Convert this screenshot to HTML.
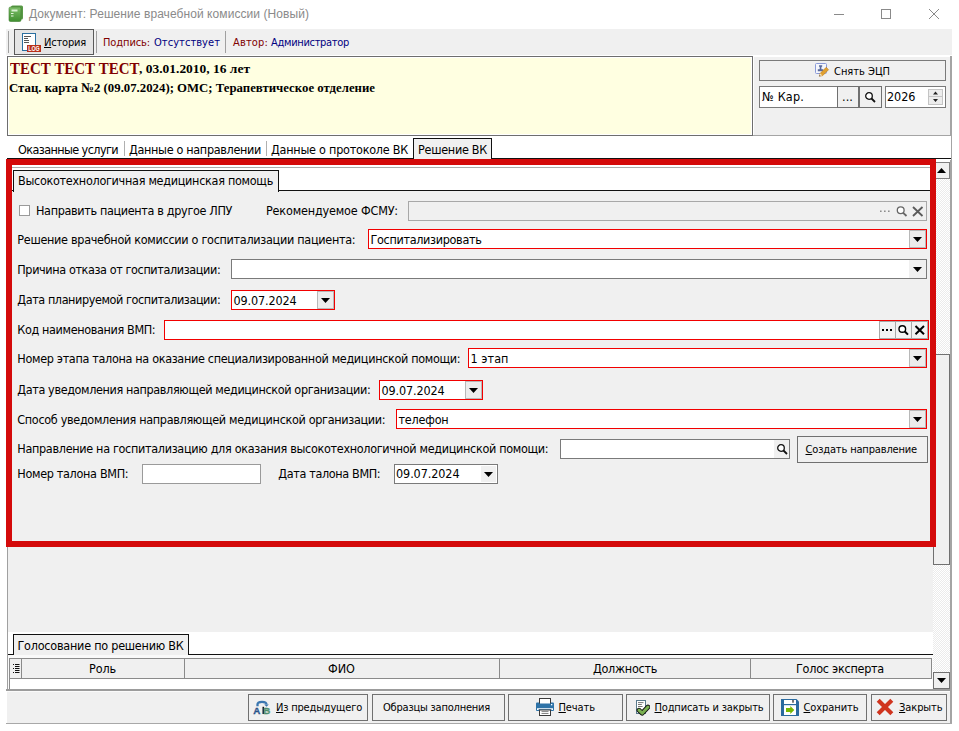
<!DOCTYPE html>
<html lang="ru"><head><meta charset="utf-8"><title>Документ: Решение врачебной комиссии (Новый)</title>
<style>
html,body{margin:0;padding:0;background:#fff;}
body{width:959px;height:731px;position:relative;overflow:hidden;font-family:'DejaVu Sans Condensed','DejaVu Sans','Liberation Sans',sans-serif;font-size:12.5px;color:#000;font-stretch:condensed;}
div,span,svg{position:absolute;box-sizing:border-box;}
span{white-space:nowrap;line-height:1;}
u{text-decoration:underline;text-underline-offset:1px;}
</style></head>
<body>
<div style="left:7px;top:29px;width:945px;height:694px;background:#f0f0f0;"></div>
<div style="left:6px;top:29px;width:1px;height:26px;background:#f0f0f0;"></div>
<div style="left:950px;top:56px;width:2px;height:668px;background:#a4a4a4;"></div>
<div style="left:6px;top:55px;width:946px;height:1px;background:#fff;"></div>
<div style="left:753px;top:56px;width:197px;height:1px;background:#fff;"></div>
<div style="left:753px;top:56px;width:1px;height:79px;background:#fff;"></div>
<div style="left:753px;top:135px;width:197px;height:1px;background:#a4a4a4;"></div>
<div style="left:6px;top:723px;width:946px;height:1px;background:#a8a8a8;"></div>
<svg style="left:8px;top:5px" width="16" height="17" viewBox="0 0 16 17">
<defs><linearGradient id="g1" x1="0" y1="0" x2="0" y2="1"><stop offset="0" stop-color="#7fbf6a"/><stop offset="1" stop-color="#3f8f2f"/></linearGradient></defs>
<rect x="3" y="0.5" width="12" height="14" rx="1.5" fill="#5a9a48"/>
<rect x="1" y="2" width="12" height="14.5" rx="1.5" fill="url(#g1)" stroke="#3d7d2d" stroke-width="0.6"/>
<rect x="3.5" y="4.5" width="6" height="2" fill="#d8efd0"/>
<rect x="3" y="8" width="2.5" height="1" fill="#e8f5e2"/><rect x="3" y="10.5" width="2.5" height="1" fill="#e8f5e2"/>
</svg>
<span style="left:29px;top:7.85px;font-size:12px;color:#8a8a8a;font-family:'Liberation Sans',sans-serif;letter-spacing:0.070px;">Документ: Решение врачебной комиссии (Новый)</span>
<svg style="left:830px;top:5px" width="120" height="20" viewBox="0 0 120 20">
<path d="M4 9.5H14" stroke="#8a8a8a" stroke-width="1" fill="none"/>
<rect x="51.5" y="4.5" width="9" height="9" stroke="#8a8a8a" stroke-width="1" fill="none"/>
<path d="M99 4L109 14M109 4L99 14" stroke="#8a8a8a" stroke-width="1" fill="none"/>
</svg>
<div style="left:8px;top:31px;width:1px;height:22px;background:#a0a0a0;"></div>
<div style="left:14px;top:29px;width:80px;height:26px;background:#e5e5e5;border:1px solid #5a5a5a;"></div>
<svg style="left:22px;top:33px" width="20" height="19" viewBox="0 0 20 19">
<rect x="0.5" y="0.5" width="13" height="17" fill="#fff" stroke="#2a6fa0" stroke-width="1"/>
<path d="M2 3.5H9M2 5.5H6M2 7.5H7M2 9.5H7" stroke="#555" stroke-width="1"/>
<rect x="5" y="12" width="14" height="7" fill="#b8301a"/>
<text x="12" y="18" font-family="Liberation Sans,sans-serif" font-weight="bold" font-size="7.2" fill="#fff" text-anchor="middle" textLength="11.5" lengthAdjust="spacingAndGlyphs">LOG</text>
</svg>
<span style="left:44px;top:36.69px;font-size:11px;color:#000;font-family:'DejaVu Sans Condensed','DejaVu Sans','Liberation Sans',sans-serif;letter-spacing:-0.190px;"><u>И</u>стория</span>
<div style="left:96px;top:31px;width:1px;height:22px;background:#a0a0a0;"></div>
<span style="left:103px;top:36.69px;font-size:11px;color:#800000;font-family:'DejaVu Sans Condensed','DejaVu Sans','Liberation Sans',sans-serif;letter-spacing:-0.107px;">Подпись:</span>
<span style="left:154px;top:36.69px;font-size:11px;color:#000080;font-family:'DejaVu Sans Condensed','DejaVu Sans','Liberation Sans',sans-serif;letter-spacing:0.058px;">Отсутствует</span>
<div style="left:225px;top:31px;width:1px;height:22px;background:#a0a0a0;"></div>
<span style="left:233px;top:36.69px;font-size:11px;color:#800000;font-family:'DejaVu Sans Condensed','DejaVu Sans','Liberation Sans',sans-serif;letter-spacing:0.159px;">Автор:</span>
<span style="left:271px;top:36.69px;font-size:11px;color:#000080;font-family:'DejaVu Sans Condensed','DejaVu Sans','Liberation Sans',sans-serif;letter-spacing:-0.312px;">Администратор</span>
<div style="left:7px;top:56px;width:746px;height:80px;background:#ffffe1;border:1px solid #6e6e6e;box-shadow:inset 0 0 0 1px #fff;"></div>
<span style="left:9.7px;top:60.6px;font-size:16px;color:#800000;font-family:'Liberation Serif',serif;font-weight:bold;transform:scaleX(0.9335);transform-origin:0 0;">ТЕСТ ТЕСТ ТЕСТ</span>
<span style="left:139px;top:62.46px;font-size:13.3px;color:#000;font-family:'Liberation Serif',serif;font-weight:bold;transform:scaleX(1.0123);transform-origin:0 0;">, 03.01.2010, 16 лет</span>
<span style="left:9.3px;top:81.46px;font-size:13.3px;color:#000;font-family:'Liberation Serif',serif;font-weight:bold;transform:scaleX(0.9613);transform-origin:0 0;">Стац. карта №2 (09.07.2024); ОМС; Терапевтическое отделение</span>
<div style="left:759px;top:60px;width:187px;height:21px;background:#f0f0f0;border:1px solid #7a7a7a;"></div>
<svg style="left:815px;top:63px" width="16" height="15" viewBox="0 0 16 15">
<rect x="0.5" y="0.5" width="11" height="10" rx="1" fill="#f4f6fc" stroke="#8a9ad8" stroke-width="1"/>
<path d="M4 2.2h3.2v1.3l-.8.6v2.2h1.8v2H2.8v-2h1.9V4.100l-.7-.6z" fill="#5a6a9a"/>
<path d="M4.300 13.300l.9-3 6-6 2.400 2.400-6 6z" fill="#e0a030" stroke="#b87410" stroke-width="0.5"/>
<path d="M4.300 13.300l.9-3 2.100 2.100z" fill="#f6e2b8"/><path d="M4.300 13.300l.4-1.300.9.900z" fill="#1a2a5a"/>
</svg>
<span style="left:834px;top:65.69px;font-size:11px;color:#000;font-family:'DejaVu Sans Condensed','DejaVu Sans','Liberation Sans',sans-serif;letter-spacing:-0.014px;">Снять ЭЦП</span>
<div style="left:759px;top:86px;width:79px;height:22px;background:#fff;border:1px solid #7a7a7a;"></div>
<span style="left:762px;top:91.42px;font-size:12.5px;color:#000;font-family:'DejaVu Sans Condensed','DejaVu Sans','Liberation Sans',sans-serif;letter-spacing:0.190px;">№ Кар.</span>
<div style="left:837px;top:86px;width:22px;height:22px;background:#f0f0f0;border:1px solid #707070;"></div>
<span style="left:842px;top:91.42px;font-size:12.5px;color:#000;font-family:'DejaVu Sans Condensed','DejaVu Sans','Liberation Sans',sans-serif;letter-spacing:0.094px;">...</span>
<div style="left:859px;top:86px;width:23px;height:22px;background:#f0f0f0;border:1px solid #707070;"></div>
<svg style="left:864px;top:91px" width="13" height="13" viewBox="0 0 13 13"><circle cx="5" cy="5" r="3.300" fill="#fff" stroke="#111" stroke-width="1.300"/><path d="M7.500 7.500L11 11" stroke="#111" stroke-width="1.800"/></svg>
<div style="left:885px;top:86px;width:61px;height:22px;background:#fff;border:1px solid #7a7a7a;"></div>
<span style="left:887px;top:91.42px;font-size:12.5px;color:#000;font-family:'DejaVu Sans Condensed','DejaVu Sans','Liberation Sans',sans-serif;letter-spacing:-0.031px;">2026</span>
<div style="left:928px;top:89px;width:15px;height:16px;background:#ececec;border:1px solid #c4c4c4;"></div>
<div style="left:928px;top:96px;width:15px;height:1px;background:#c4c4c4;"></div>
<svg style="left:928px;top:89px" width="15" height="16" viewBox="0 0 15 16"><path d="M5 5.5L7.5 2.5L10 5.5Z M5 10L7.5 13L10 10Z" fill="#222"/></svg>
<div style="left:7px;top:136px;width:944px;height:24px;background:#fff;"></div>
<div style="left:7px;top:158px;width:944px;height:1px;background:#111;"></div>
<span style="left:18px;top:144.43px;font-size:12.5px;color:#000;font-family:'DejaVu Sans Condensed','DejaVu Sans','Liberation Sans',sans-serif;letter-spacing:-0.587px;">Оказанные услуги</span>
<div style="left:124px;top:141px;width:1px;height:15px;background:#b0b0b0;"></div>
<span style="left:129px;top:144.43px;font-size:12.5px;color:#000;font-family:'DejaVu Sans Condensed','DejaVu Sans','Liberation Sans',sans-serif;letter-spacing:-0.328px;">Данные о направлении</span>
<div style="left:266px;top:141px;width:1px;height:15px;background:#b0b0b0;"></div>
<span style="left:271px;top:144.43px;font-size:12.5px;color:#000;font-family:'DejaVu Sans Condensed','DejaVu Sans','Liberation Sans',sans-serif;letter-spacing:-0.242px;">Данные о протоколе ВК</span>
<div style="left:413px;top:138px;width:79px;height:21px;background:#f0f0f0;border:1px solid #111;border-bottom:none;"></div>
<span style="left:418px;top:144.43px;font-size:12.5px;color:#000;font-family:'DejaVu Sans Condensed','DejaVu Sans','Liberation Sans',sans-serif;letter-spacing:-0.277px;">Решение ВК</span>
<div style="left:7px;top:159px;width:928px;height:388px;background:#f0f0f0;"></div>
<div style="left:12px;top:165px;width:918px;height:26px;background:#fff;"></div>
<div style="left:12px;top:167px;width:918px;height:1px;background:#acacac;"></div>
<div style="left:12px;top:190px;width:918px;height:1px;background:#111;"></div>
<div style="left:13px;top:170px;width:266px;height:22px;background:#f0f0f0;border:1px solid #111;border-bottom:none;"></div>
<span style="left:18px;top:175.43px;font-size:12.5px;color:#000;font-family:'DejaVu Sans Condensed','DejaVu Sans','Liberation Sans',sans-serif;letter-spacing:-0.290px;">Высокотехнологичная медицинская помощь</span>
<div style="left:19px;top:205px;width:11px;height:11px;background:#fff;border:1px solid #9a9a9a;"></div>
<span style="left:36px;top:205.43px;font-size:12.5px;color:#000;font-family:'DejaVu Sans Condensed','DejaVu Sans','Liberation Sans',sans-serif;letter-spacing:-0.346px;">Направить пациента в другое ЛПУ</span>
<span style="left:266px;top:205.43px;font-size:12.5px;color:#000;font-family:'DejaVu Sans Condensed','DejaVu Sans','Liberation Sans',sans-serif;letter-spacing:-0.170px;">Рекомендуемое ФСМУ:</span>
<div style="left:408px;top:201px;width:519px;height:20px;background:#f0f0f0;border:1px solid #a8a8a8;"></div>
<svg style="left:878px;top:203px" width="48" height="17" viewBox="0 0 48 17"><path d="M2 7.500h1.600v1.600h-1.600zM6 7.500h1.600v1.600h-1.600zM10 7.500h1.600v1.600h-1.600z" fill="#8c8c8c"/><circle cx="22.700" cy="7.200" r="3.400" fill="#fff" stroke="#666" stroke-width="1.300"/><path d="M25.200 9.800L28.500 13" stroke="#666" stroke-width="1.800"/><path d="M35 4L44.500 13M44.500 4L35 13" stroke="#5a5a5a" stroke-width="1.800"/></svg>
<span style="left:17.3px;top:234.43px;font-size:12.5px;color:#000;font-family:'DejaVu Sans Condensed','DejaVu Sans','Liberation Sans',sans-serif;letter-spacing:-0.298px;">Решение врачебной комиссии о госпитализации пациента:</span>
<div style="left:368px;top:229px;width:559px;height:20px;background:#fff;border:1px solid #f20000;"></div>
<div style="left:909px;top:230px;width:17px;height:18px;background:#ececec;border:1px solid #b8b8b8;"></div>
<svg style="left:913px;top:237px" width="9" height="5" viewBox="0 0 9 5"><path d="M0 0H9L4.5 5Z" fill="#000"/></svg>
<span style="left:370.5px;top:233.73px;font-size:12.5px;color:#000;font-family:'DejaVu Sans Condensed','DejaVu Sans','Liberation Sans',sans-serif;letter-spacing:-0.325px;">Госпитализировать</span>
<span style="left:17.3px;top:264.43px;font-size:12.5px;color:#000;font-family:'DejaVu Sans Condensed','DejaVu Sans','Liberation Sans',sans-serif;letter-spacing:-0.386px;">Причина отказа от госпитализации:</span>
<div style="left:231px;top:259px;width:696px;height:20px;background:#fff;border:1px solid #7a7a7a;"></div>
<div style="left:909px;top:260px;width:17px;height:18px;background:#f0f0f0;"></div>
<svg style="left:913px;top:267px" width="9" height="5" viewBox="0 0 9 5"><path d="M0 0H9L4.5 5Z" fill="#000"/></svg>
<span style="left:17.3px;top:294.43px;font-size:12.5px;color:#000;font-family:'DejaVu Sans Condensed','DejaVu Sans','Liberation Sans',sans-serif;letter-spacing:-0.414px;">Дата планируемой госпитализации:</span>
<div style="left:231px;top:290px;width:104px;height:20px;background:#fff;border:1px solid #f20000;"></div>
<div style="left:317px;top:291px;width:17px;height:18px;background:#ececec;border:1px solid #b8b8b8;"></div>
<svg style="left:321px;top:298px" width="9" height="5" viewBox="0 0 9 5"><path d="M0 0H9L4.5 5Z" fill="#000"/></svg>
<span style="left:233.5px;top:294.73px;font-size:12.5px;color:#000;font-family:'DejaVu Sans Condensed','DejaVu Sans','Liberation Sans',sans-serif;letter-spacing:-0.138px;">09.07.2024</span>
<span style="left:17.3px;top:324.43px;font-size:12.5px;color:#000;font-family:'DejaVu Sans Condensed','DejaVu Sans','Liberation Sans',sans-serif;letter-spacing:-0.362px;">Код наименования ВМП:</span>
<div style="left:164px;top:320px;width:765px;height:20px;background:#fff;border:1px solid #f20000;"></div>
<div style="left:879px;top:321px;width:17px;height:18px;background:#f2f2f2;border:1px solid #a8a8a8;"></div>
<div style="left:895px;top:321px;width:17px;height:18px;background:#f2f2f2;border:1px solid #a8a8a8;"></div>
<div style="left:911px;top:321px;width:17px;height:18px;background:#f2f2f2;border:1px solid #a8a8a8;"></div>
<svg style="left:879px;top:321px" width="49" height="18" viewBox="0 0 49 18"><path d="M3 8h2v2h-2zM7 8h2v2h-2zM11 8h2v2h-2z" fill="#000"/><circle cx="23.300" cy="8" r="3.300" fill="#fff" stroke="#000" stroke-width="1.400"/><path d="M25.800 10.500L29 13.600" stroke="#000" stroke-width="2"/><path d="M36.500 5L45 13.300M45 5L36.500 13.300" stroke="#000" stroke-width="2"/></svg>
<span style="left:17.3px;top:353.43px;font-size:12.5px;color:#000;font-family:'DejaVu Sans Condensed','DejaVu Sans','Liberation Sans',sans-serif;letter-spacing:-0.327px;">Номер этапа талона на оказание специализированной медицинской помощи:</span>
<div style="left:468px;top:348px;width:459px;height:20px;background:#fff;border:1px solid #f20000;"></div>
<div style="left:909px;top:349px;width:17px;height:18px;background:#ececec;border:1px solid #b8b8b8;"></div>
<svg style="left:913px;top:356px" width="9" height="5" viewBox="0 0 9 5"><path d="M0 0H9L4.5 5Z" fill="#000"/></svg>
<span style="left:470.5px;top:352.73px;font-size:12.5px;color:#000;font-family:'DejaVu Sans Condensed','DejaVu Sans','Liberation Sans',sans-serif;letter-spacing:0.049px;">1 этап</span>
<span style="left:17.3px;top:384.43px;font-size:12.5px;color:#000;font-family:'DejaVu Sans Condensed','DejaVu Sans','Liberation Sans',sans-serif;letter-spacing:-0.373px;">Дата уведомления направляющей медицинской организации:</span>
<div style="left:379px;top:380px;width:104px;height:20px;background:#fff;border:1px solid #f20000;"></div>
<div style="left:465px;top:381px;width:17px;height:18px;background:#ececec;border:1px solid #b8b8b8;"></div>
<svg style="left:469px;top:388px" width="9" height="5" viewBox="0 0 9 5"><path d="M0 0H9L4.5 5Z" fill="#000"/></svg>
<span style="left:381.5px;top:384.73px;font-size:12.5px;color:#000;font-family:'DejaVu Sans Condensed','DejaVu Sans','Liberation Sans',sans-serif;letter-spacing:-0.138px;">09.07.2024</span>
<span style="left:17.3px;top:414.43px;font-size:12.5px;color:#000;font-family:'DejaVu Sans Condensed','DejaVu Sans','Liberation Sans',sans-serif;letter-spacing:-0.324px;">Способ уведомления направляющей медицинской организации:</span>
<div style="left:396px;top:409px;width:531px;height:20px;background:#fff;border:1px solid #f20000;"></div>
<div style="left:909px;top:410px;width:17px;height:18px;background:#ececec;border:1px solid #b8b8b8;"></div>
<svg style="left:913px;top:417px" width="9" height="5" viewBox="0 0 9 5"><path d="M0 0H9L4.5 5Z" fill="#000"/></svg>
<span style="left:398.5px;top:413.73px;font-size:12.5px;color:#000;font-family:'DejaVu Sans Condensed','DejaVu Sans','Liberation Sans',sans-serif;letter-spacing:-0.205px;">телефон</span>
<span style="left:17.3px;top:443.43px;font-size:12.5px;color:#000;font-family:'DejaVu Sans Condensed','DejaVu Sans','Liberation Sans',sans-serif;letter-spacing:-0.318px;">Направление на госпитализацию для оказания высокотехнологичной медицинской помощи:</span>
<div style="left:560px;top:439px;width:230px;height:20px;background:#fff;border:1px solid #7a7a7a;"></div>
<div style="left:774px;top:440px;width:15px;height:18px;background:#f0f0f0;"></div>
<svg style="left:776px;top:443px" width="13" height="13" viewBox="0 0 13 13"><circle cx="5" cy="5" r="3.300" fill="#fff" stroke="#111" stroke-width="1.300"/><path d="M7.500 7.500L11 11" stroke="#111" stroke-width="1.800"/></svg>
<div style="left:797px;top:436px;width:131px;height:27px;background:#f0f0f0;border:1px solid #707070;"></div>
<span style="left:805.5px;top:443.69px;font-size:11px;color:#000;font-family:'DejaVu Sans Condensed','DejaVu Sans','Liberation Sans',sans-serif;letter-spacing:-0.157px;"><u>С</u>оздать направление</span>
<span style="left:17.3px;top:468.43px;font-size:12.5px;color:#000;font-family:'DejaVu Sans Condensed','DejaVu Sans','Liberation Sans',sans-serif;letter-spacing:-0.321px;">Номер талона ВМП:</span>
<div style="left:142px;top:464px;width:119px;height:20px;background:#fff;border:1px solid #9a9a9a;"></div>
<span style="left:278.3px;top:468.43px;font-size:12.5px;color:#000;font-family:'DejaVu Sans Condensed','DejaVu Sans','Liberation Sans',sans-serif;letter-spacing:-0.355px;">Дата талона ВМП:</span>
<div style="left:394px;top:464px;width:104px;height:20px;background:#fff;border:1px solid #7a7a7a;"></div>
<span style="left:396px;top:468.43px;font-size:12.5px;color:#000;font-family:'DejaVu Sans Condensed','DejaVu Sans','Liberation Sans',sans-serif;letter-spacing:-0.087px;">09.07.2024</span>
<div style="left:481px;top:466px;width:15px;height:16px;background:#f0f0f0;"></div>
<svg style="left:484px;top:471.500px" width="9" height="5" viewBox="0 0 9 5"><path d="M0 0H9L4.500 5Z" fill="#000"/></svg>
<div style="left:7px;top:547px;width:1px;height:143px;background:#a0a0a0;"></div>
<div style="left:8px;top:632px;width:925px;height:23px;background:#fff;"></div>
<div style="left:8px;top:654px;width:925px;height:1px;background:#111;"></div>
<div style="left:13px;top:634px;width:176px;height:21px;background:#f0f0f0;border:1px solid #111;border-bottom:none;"></div>
<span style="left:17.5px;top:640.42px;font-size:12.5px;color:#000;font-family:'DejaVu Sans Condensed','DejaVu Sans','Liberation Sans',sans-serif;letter-spacing:-0.241px;">Голосование по решению ВК</span>
<div style="left:8px;top:655px;width:925px;height:34px;background:#fafafa;"></div>
<div style="left:9px;top:658px;width:923px;height:31px;background:#fff;border:1px solid #8c8c8c;border-right:none;border-bottom:none;"></div>
<div style="left:10px;top:659px;width:12px;height:20px;background:#f0f0f0;border-right:1px solid #8a8a8a;border-bottom:1px solid #8a8a8a;"></div>
<svg style="left:13px;top:664px" width="7" height="10" viewBox="0 0 7 10"><path d="M0 0.5H1M2 0.5H6.500M2 2.500H6.500M0 4.500H1M2 4.500H6.500M2 6.500H6.500M0 8.500H1M2 8.500H6.500" stroke="#111" stroke-width="1"/></svg>
<div style="left:22px;top:659px;width:163px;height:20px;background:#f0f0f0;border-right:1px solid #8a8a8a;border-bottom:1px solid #8a8a8a;"></div>
<span style="left:89px;top:663.42px;font-size:12.5px;color:#000;font-family:'DejaVu Sans Condensed','DejaVu Sans','Liberation Sans',sans-serif;letter-spacing:-0.121px;">Роль</span>
<div style="left:185px;top:659px;width:315px;height:20px;background:#f0f0f0;border-right:1px solid #8a8a8a;border-bottom:1px solid #8a8a8a;"></div>
<span style="left:328px;top:663.42px;font-size:12.5px;color:#000;font-family:'DejaVu Sans Condensed','DejaVu Sans','Liberation Sans',sans-serif;letter-spacing:0.016px;">ФИО</span>
<div style="left:500px;top:659px;width:251px;height:20px;background:#f0f0f0;border-right:1px solid #8a8a8a;border-bottom:1px solid #8a8a8a;"></div>
<span style="left:593px;top:663.42px;font-size:12.5px;color:#000;font-family:'DejaVu Sans Condensed','DejaVu Sans','Liberation Sans',sans-serif;letter-spacing:-0.288px;">Должность</span>
<div style="left:751px;top:659px;width:181px;height:20px;background:#f0f0f0;border-right:1px solid #8a8a8a;border-bottom:1px solid #8a8a8a;"></div>
<span style="left:796px;top:663.42px;font-size:12.5px;color:#000;font-family:'DejaVu Sans Condensed','DejaVu Sans','Liberation Sans',sans-serif;letter-spacing:-0.256px;">Голос эксперта</span>
<div style="left:933px;top:159px;width:17px;height:530px;background:#fff;"></div>
<div style="left:933px;top:162px;width:17px;height:527px;background:repeating-conic-gradient(#ffffff 0 25%,#ebebeb 0 50%) 0 0/2px 2px;"></div>
<div style="left:933px;top:162px;width:17px;height:17px;background:#f0f0f0;border:1px solid #808080;"></div>
<svg style="left:937px;top:168px" width="9" height="5" viewBox="0 0 9 5"><path d="M0 5H9L4.5 0Z" fill="#000"/></svg>
<div style="left:933px;top:354px;width:17px;height:211px;background:#f0f0f0;border:1px solid #707070;"></div>
<div style="left:933px;top:672px;width:17px;height:17px;background:#f0f0f0;border:1px solid #707070;"></div>
<svg style="left:937px;top:678px" width="9" height="5" viewBox="0 0 9 5"><path d="M0 0H9L4.5 5Z" fill="#000"/></svg>
<div style="left:6px;top:689px;width:944px;height:2px;background:#9c9c9c;"></div>
<div style="left:7px;top:691px;width:943px;height:1px;background:#fafafa;"></div>
<div style="left:248px;top:694px;width:120px;height:27px;background:#f0f0f0;border:1px solid #707070;"></div>
<span style="left:276px;top:701.69px;font-size:11px;color:#000;font-family:'DejaVu Sans Condensed','DejaVu Sans','Liberation Sans',sans-serif;letter-spacing:-0.192px;"><u>И</u>з предыдущего</span>
<div style="left:372px;top:694px;width:133px;height:27px;background:#f0f0f0;border:1px solid #707070;"></div>
<span style="left:383px;top:701.69px;font-size:11px;color:#000;font-family:'DejaVu Sans Condensed','DejaVu Sans','Liberation Sans',sans-serif;letter-spacing:-0.211px;">Образцы заполнения</span>
<div style="left:508px;top:694px;width:115px;height:27px;background:#f0f0f0;border:1px solid #707070;"></div>
<span style="left:558.5px;top:701.69px;font-size:11px;color:#000;font-family:'DejaVu Sans Condensed','DejaVu Sans','Liberation Sans',sans-serif;letter-spacing:-0.094px;"><u>П</u>ечать</span>
<div style="left:626px;top:694px;width:144px;height:27px;background:#f0f0f0;border:1px solid #707070;"></div>
<span style="left:654.5px;top:701.69px;font-size:11px;color:#000;font-family:'DejaVu Sans Condensed','DejaVu Sans','Liberation Sans',sans-serif;letter-spacing:-0.162px;"><u>П</u>одписать и закрыть</span>
<div style="left:773px;top:694px;width:94px;height:27px;background:#f0f0f0;border:1px solid #707070;"></div>
<span style="left:803.5px;top:701.69px;font-size:11px;color:#000;font-family:'DejaVu Sans Condensed','DejaVu Sans','Liberation Sans',sans-serif;letter-spacing:-0.076px;"><u>С</u>охранить</span>
<div style="left:871px;top:694px;width:76px;height:27px;background:#f0f0f0;border:1px solid #707070;"></div>
<span style="left:899px;top:701.69px;font-size:11px;color:#000;font-family:'DejaVu Sans Condensed','DejaVu Sans','Liberation Sans',sans-serif;letter-spacing:-0.085px;"><u>З</u>акрыть</span>
<svg style="left:253px;top:700px" width="18" height="15" viewBox="0 0 18 15">
<path d="M4.500 6.300V4.600c0-2 1.500-2.700 4.500-2.700s4.500.7 4.500 2.700" fill="none" stroke="#3a76b0" stroke-width="2.300"/>
<path d="M11.200 4.400h4.600l-2.300 2.400z" fill="#3a76b0"/>
<text x="0.300" y="14" font-family="Liberation Sans,sans-serif" font-weight="bold" font-size="9.800" fill="#2f64a0" stroke="#1f3f70" stroke-width="0.300">A</text>
<rect x="9.500" y="6.800" width="1.500" height="7.200" fill="#111"/>
<text x="10.200" y="14" font-family="Liberation Sans,sans-serif" font-weight="bold" font-size="9.800" fill="#5a9a7a" stroke="#3f7f60" stroke-width="0.300">B</text>
</svg>
<svg style="left:536px;top:698px" width="18" height="18" viewBox="0 0 18 18">
<rect x="3.500" y="0.500" width="11" height="6" fill="#fff" stroke="#3a3a3a" stroke-width="1"/>
<path d="M0 5.500q0-1 1-1h2v1h12v-1h2q1 0 1 1V12q0 1-1 1H1q-1 0-1-1z" fill="#2e73a8"/>
<path d="M1 10.300h16v1.700h-1.500v-.7h-13v.7H1z" fill="#fff"/>
<rect x="15" y="6" width="1.300" height="1.300" fill="#fff"/>
<rect x="3.500" y="12" width="11" height="5.500" fill="#fff" stroke="#3a3a3a" stroke-width="1"/>
<path d="M5.500 13.600h7M5.500 15.500h7" stroke="#777" stroke-width="0.900"/>
</svg>
<svg style="left:636px;top:700px" width="14" height="16" viewBox="0 0 14 16">
<rect x="0.500" y="0.500" width="9" height="13" fill="#fff" stroke="#5a7a8c" stroke-width="1"/>
<path d="M2 2.600h5.500M2 4.500h3.800M2 6.500h4.600M2 8.500h2.500" stroke="#666" stroke-width="0.900"/>
<path d="M3 10.200l3.200 3 5.800-6.200" fill="none" stroke="#111" stroke-width="4.800" stroke-linecap="round" stroke-linejoin="round"/>
<path d="M3 10.200l3.200 3 5.800-6.200" fill="none" stroke="#7ab050" stroke-width="3" stroke-linecap="round" stroke-linejoin="round"/>
</svg>
<svg style="left:781px;top:699px" width="18" height="17" viewBox="0 0 18 17">
<path d="M0 0h15.500l2.500 2.500V17H0z" fill="#2a6a9e"/>
<rect x="3" y="1" width="12" height="4" fill="#fff"/><rect x="11" y="1" width="2" height="2.700" fill="#777"/>
<rect x="3" y="6.200" width="12" height="9.800" fill="#fff"/>
<path d="M5 9h4.300V7l4 4-4 4v-2H5z" fill="#78b800"/>
</svg>
<svg style="left:876px;top:698px" width="18" height="18" viewBox="0 0 18 18">
<path d="M2.200 2.200L15.800 15.800M15.800 2.200L2.200 15.800" stroke="#d0341e" stroke-width="4.200" fill="none"/>
</svg>
<div style="left:6px;top:159px;width:930px;height:388px;border:6px solid #d40a0a;"></div>
</body></html>
